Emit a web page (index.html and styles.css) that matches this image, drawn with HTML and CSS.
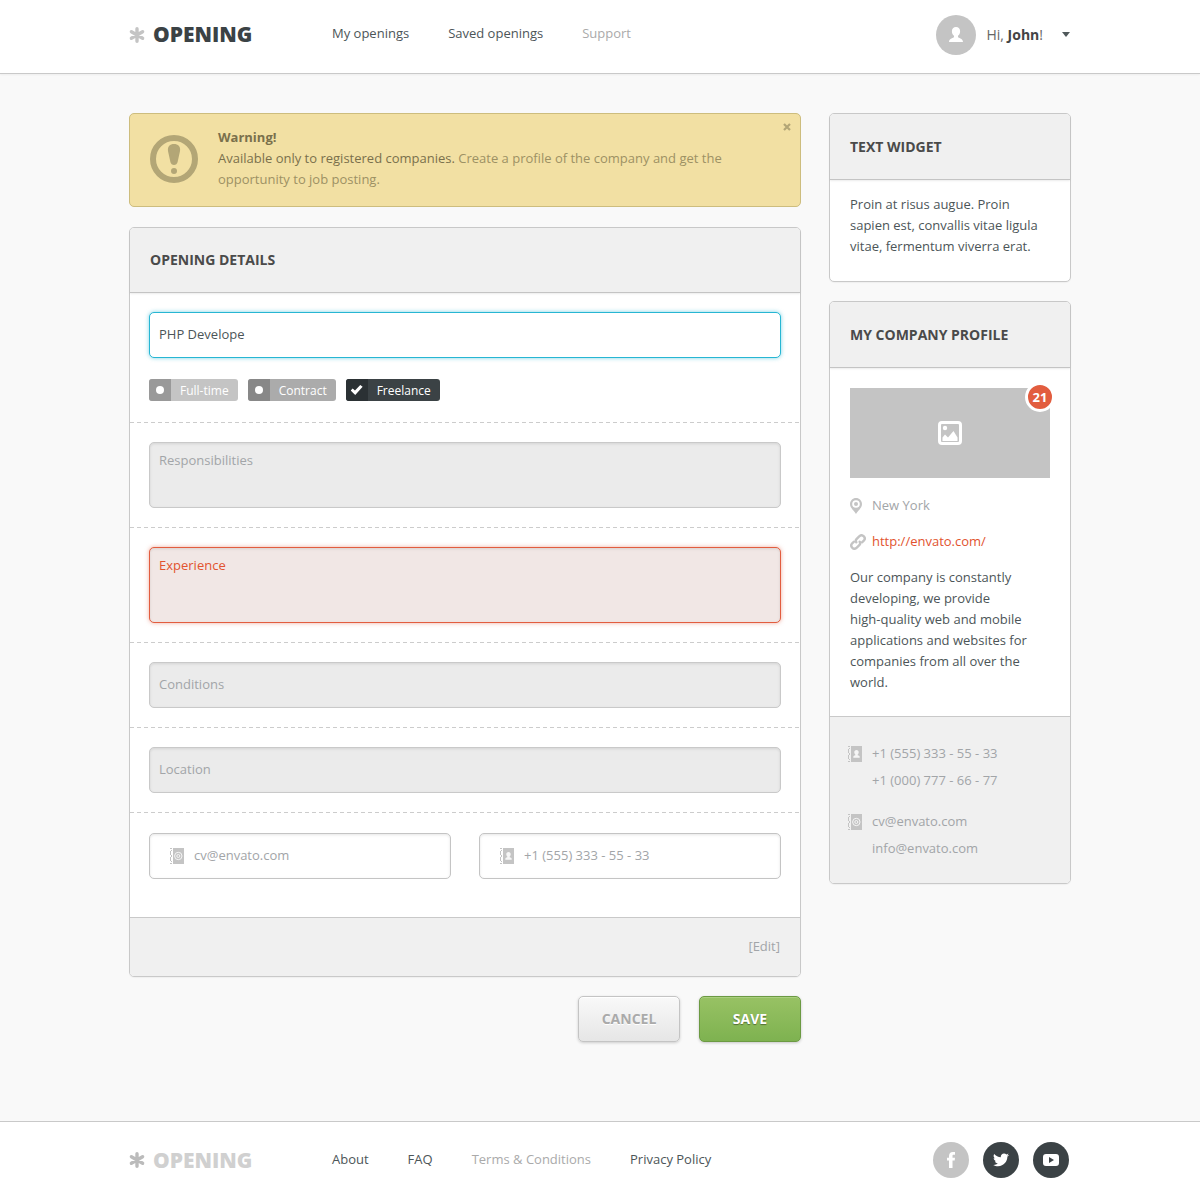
FILE: index.html
```
<!DOCTYPE html>
<html lang="en">
<head>
  <meta charset="UTF-8" />
  <meta name="viewport" content="width=device-width, initial-scale=1.0" />
  <title>Opening</title>
  <link rel="stylesheet" href="styles.css">
</head>
<body>
  <!-- shared icons -->
  <svg class="sprite" aria-hidden="true">
    <symbol id="i-star" viewBox="0 0 16 16">
      <g fill="none" stroke="currentColor" stroke-width="3.400" stroke-linecap="round">
        <path d="M8 1.700v12.600M2.400 4.700l11.200 6.600M13.600 4.700L2.400 11.300" />
      </g>
    </symbol>
    <symbol id="i-phone" viewBox="0 0 14 16">
      <path fill="currentColor" d="M3 0h11v16H3zM0 0h2v1H0zM0 3h1v4H0zM0 9h1v4H0zM0 15h2v1H0zM1 2h1v1H1zM1 7h1v2H1zM1 13h1v1H1z" />
      <path class="cut" d="M8.500 4c1.400 0 2.200 1 2.200 2.200 0 1-.4 1.800-1 2.200v.9c1 .3 2 .7 2 1.700v.7H5.300V11c0-1 1-1.400 2-1.700v-.9c-.6-.4-1-1.200-1-2.200C6.300 5 7.100 4 8.500 4z" />
    </symbol>
    <symbol id="i-mail" viewBox="0 0 14 16">
      <path fill="currentColor" d="M3 0h11v16H3zM0 0h2v1H0zM0 3h1v4H0zM0 9h1v4H0zM0 15h2v1H0zM1 2h1v1H1zM1 7h1v2H1zM1 13h1v1H1z" />
      <circle class="ring" cx="8.300" cy="8" r="3.700" />
      <circle class="ring" cx="8.300" cy="8" r="1.500" />
    </symbol>
  </svg>

  <header class="header">
    <div class="container bar">
      <a href="#" class="logo"><svg><use href="#i-star" /></svg>OPENING</a>
      <nav class="nav">
        <a href="#">My openings</a>
        <a href="#">Saved openings</a>
        <a href="#" class="muted">Support</a>
      </nav>
      <button type="button" class="user">
        <span class="avatar">
          <svg width="14" height="15" viewBox="0 0 14 15"><path fill="#fff" d="M7 0c2.600 0 4.100 1.700 4.100 4.200 0 2-.8 3.700-2.100 4.500v1.400c0 .9 5 1.200 5 4.900H0c0-3.700 5-4 5-4.900V8.700C3.700 7.900 2.900 6.200 2.900 4.200 2.900 1.700 4.400 0 7 0z" /></svg>
        </span>
        <span>Hi, <b>John</b>!</span>
        <i class="caret"></i>
      </button>
    </div>
  </header>

  <div class="container page">
    <main>
      <div class="alert">
        <svg class="alert-icon" viewBox="0 0 48 48">
          <circle cx="24" cy="24" r="21" fill="none" stroke="currentColor" stroke-width="6" />
          <path fill="currentColor" d="M24 9c4 0 6.700 2.600 6 7l-2.400 11c-.5 2-1.800 3-3.600 3s-3.100-1-3.600-3L18 16c-.7-4.400 2-7 6-7z" />
          <circle cx="24" cy="36" r="3" fill="currentColor" />
        </svg>
        <p>
          <strong>Warning!</strong><br>
          <span>Available only to registered companies.</span>
          Create a profile of the company and get the opportunity to job posting.
        </p>
        <button type="button" class="close" aria-label="Close">
          <svg width="8" height="8" viewBox="0 0 8 8"><path d="M1 1l6 6M7 1L1 7" stroke="currentColor" stroke-width="2.200" /></svg>
        </button>
      </div>

      <form id="opening" class="panel">
        <h2 class="panel-head">OPENING DETAILS</h2>
        <div class="section">
          <input type="text" class="field active" value="PHP Develope" aria-label="Position">
          <div class="tags">
            <label class="tag tag-light"><input type="checkbox">Full-time</label>
            <label class="tag"><input type="checkbox">Contract</label>
            <label class="tag tag-dark"><input type="checkbox" checked>Freelance</label>
          </div>
        </div>
        <div class="section">
          <textarea class="field filled" placeholder="Responsibilities" aria-label="Responsibilities"></textarea>
        </div>
        <div class="section">
          <textarea class="field error" placeholder="Experience" aria-label="Experience"></textarea>
        </div>
        <div class="section">
          <input type="text" class="field filled" placeholder="Conditions" aria-label="Conditions">
        </div>
        <div class="section">
          <input type="text" class="field filled" placeholder="Location" aria-label="Location">
        </div>
        <div class="section contacts">
          <label class="field with-icon">
            <svg class="book"><use href="#i-mail" /></svg>
            <input type="email" placeholder="cv@envato.com" aria-label="Email">
          </label>
          <label class="field with-icon">
            <svg class="book"><use href="#i-phone" /></svg>
            <input type="tel" placeholder="+1 (555) 333 - 55 - 33" aria-label="Phone">
          </label>
        </div>
        <div class="panel-foot edit"><a href="#">[Edit]</a></div>
      </form>

      <div class="actions">
        <button type="button" class="btn">CANCEL</button>
        <button type="submit" form="opening" class="btn btn-save">SAVE</button>
      </div>
    </main>

    <aside class="sidebar">
      <section class="panel">
        <h2 class="panel-head">TEXT WIDGET</h2>
        <p class="widget-text">Proin at risus augue. Proin sapien est, convallis vitae ligula vitae, fermentum viverra erat.</p>
      </section>

      <section class="panel">
        <h2 class="panel-head">MY COMPANY PROFILE</h2>
        <div class="profile">
          <div class="photo">
            <svg width="24" height="24" viewBox="0 0 24 24">
              <rect x="1.500" y="1.500" width="21" height="21" rx="2.500" fill="none" stroke="#fff" stroke-width="3" />
              <circle cx="7" cy="7" r="2.200" fill="#fff" />
              <path fill="#fff" d="M4.500 20v-3.500L7 13.500l3 3 5.500-6.500 4 6.500V20z" />
            </svg>
            <span class="badge">21</span>
          </div>
          <div class="info">
            <svg width="12" height="16" viewBox="0 0 12 16"><path fill="currentColor" fill-rule="evenodd" d="M6 0c3.300 0 6 2.700 6 6 0 3.800-3.500 6-6 10C3.500 12 0 9.800 0 6c0-3.300 2.700-6 6-6zm0 2.200a3.800 3.800 0 1 0 0 7.600 3.800 3.800 0 0 0 0-7.600z" /><circle cx="6" cy="6" r="2" fill="currentColor" /></svg>
            <span>New York</span>
          </div>
          <div class="info">
            <svg width="16" height="16" viewBox="0 0 16 16"><g fill="none" stroke="currentColor" stroke-width="2.400" stroke-linecap="round"><path d="M6.300 8.200c-.9-1.300-.6-2.400.4-3.400l2.500-2.400c1.200-1.200 3-1.500 4.400-.2s1.400 3.200.2 4.500L12 8.300" /><path d="M9.700 7.800c.9 1.300.6 2.400-.4 3.400l-2.500 2.400c-1.200 1.200-3 1.500-4.400.2s-1.400-3.200-.2-4.500L4 7.700" /></g></svg>
            <a href="#">http://envato.com/</a>
          </div>
          <p>Our company is constantly developing, we provide<br>high-quality web and mobile applications and websites for companies from all over the world.</p>
        </div>
        <div class="panel-foot numbers">
          <div class="row">
            <svg class="book"><use href="#i-phone" /></svg>
            <div>+1 (555) 333 - 55 - 33<br>+1 (000) 777 - 66 - 77</div>
          </div>
          <div class="row">
            <svg class="book"><use href="#i-mail" /></svg>
            <div>cv@envato.com<br>info@envato.com</div>
          </div>
        </div>
      </section>
    </aside>
  </div>

  <footer class="footer">
    <div class="container bar">
      <a href="#" class="logo logo-muted"><svg><use href="#i-star" /></svg>OPENING</a>
      <nav class="nav">
        <a href="#">About</a>
        <a href="#">FAQ</a>
        <a href="#" class="muted">Terms &amp; Conditions</a>
        <a href="#">Privacy Policy</a>
      </nav>
      <div class="social">
        <a href="#" class="light" aria-label="Facebook"><svg width="10" height="16" viewBox="0 0 10 16"><path fill="#fff" d="M3 16V8.500H1V5.800h2V4.200C3 1.500 4.400 0 6.900 0H9v2.800H7.700c-1 0-1.200.5-1.200 1.300v1.700H9l-.3 2.700H6.500V16z" /></svg></a>
        <a href="#" aria-label="Twitter"><svg width="16" height="14" viewBox="0 0 16 14"><path fill="#fff" d="M16 1.900c-.6.3-1.200.4-1.900.5.7-.4 1.200-1 1.400-1.800-.6.4-1.300.6-2.100.8C12.800.8 12 .4 11 .4 9.200.4 7.800 1.800 7.800 3.600c0 .3 0 .5.100.7C5.200 4.200 2.800 2.900 1.200 1-.1 3.200 1 4.700 2.200 5.400c-.5 0-1-.2-1.500-.4 0 1.600 1.100 2.900 2.600 3.200-.5.1-.9.1-1.400 0 .4 1.300 1.600 2.200 3 2.300C3.500 11.600 1.800 12.100.2 11.900 1.600 12.800 3.300 13.300 5 13.300c6 0 9.400-5 9.400-9.700.6-.5 1.200-1 1.600-1.700z" /></svg></a>
        <a href="#" aria-label="YouTube"><svg width="16" height="12" viewBox="0 0 16 12"><path fill="#fff" fill-rule="evenodd" d="M3 0h10c2 0 3 1 3 3v6c0 2-1 3-3 3H3c-2 0-3-1-3-3V3c0-2 1-3 3-3zm3 3v6l5-3z" /></svg></a>
      </div>
    </div>
  </footer>
</body>
</html>
```
FILE: styles.css
```
* {
  box-sizing: border-box;
}
body {
  margin: 0;
  background: #f9f9f9;
  color: #4c5558;
  font: 13px/21px "Open Sans", "Noto Sans", sans-serif;
}
h2, p {
  margin: 0;
}
a {
  color: inherit;
  text-decoration: none;
}
button, input, textarea {
  font: inherit;
  color: inherit;
}
button {
  padding: 0;
  border: 0;
  background: none;
  cursor: pointer;
}
svg {
  display: block;
  flex: none;
}
.sprite {
  position: absolute;
  width: 0;
  height: 0;
}
.container {
  max-width: 942px;
  margin: 0 auto;
}

/* header / footer */
.header {
  background: #fff;
  border-bottom: 1px solid #c9c9c9;
  box-shadow: 0 1px 2px rgba(0, 0, 0, 0.05);
}
.footer {
  background: #fff;
  border-top: 1px solid #c9c9c9;
}
.bar {
  display: flex;
  align-items: center;
  height: 73px;
}
.header .bar {
  padding: 0 1px 4px 0;
}
.footer .bar {
  padding: 3px 2px 0 0;
}
.logo {
  display: flex;
  align-items: center;
  width: 203px;
  gap: 8px;
  font-size: 21px;
  font-weight: 800;
  color: #3b4245;
}
.logo svg {
  width: 16px;
  height: 16px;
  color: #c4c4c4;
}
.logo-muted {
  color: #d0d0d0;
}
.logo-muted svg {
  color: #bbb;
}
.nav {
  display: flex;
  flex: 1;
  gap: 39px;
  padding-bottom: 2px;
}
.nav .muted {
  color: #aaa;
}
.user {
  display: flex;
  align-items: center;
  font-size: 14px;
  color: #666;
}
.user b {
  color: #444;
}
.avatar {
  display: flex;
  align-items: center;
  justify-content: center;
  width: 40px;
  height: 40px;
  margin-right: 10px;
  border-radius: 50%;
  background: #c4c4c4;
}
.caret {
  margin-left: 19px;
  border: 4px solid transparent;
  border-top: 5px solid #50595b;
  border-bottom: 0;
}
.social {
  display: flex;
  gap: 14px;
}
.social a {
  display: flex;
  align-items: center;
  justify-content: center;
  width: 36px;
  height: 36px;
  border-radius: 50%;
  background: #3b4245;
}
.social .light {
  background: #c4c4c4;
}

/* layout */
.page {
  display: grid;
  grid-template-columns: 1fr 242px;
  align-items: start;
  gap: 28px;
  padding: 39px 0 79px;
}
.sidebar {
  display: grid;
  gap: 19px;
}
.alert {
  position: relative;
  display: flex;
  align-items: center;
  gap: 20px;
  margin-bottom: 20px;
  padding: 13px 20px 16px;
  border: 1px solid #cdbd7e;
  border-radius: 5px;
  background: #f2e0a3;
  color: #9d9164;
}
.alert-icon {
  width: 48px;
  height: 48px;
  color: #b3a676;
}
.alert strong, .alert span {
  color: #7a704c;
}
.close {
  position: absolute;
  top: 9px;
  right: 9px;
  color: #b3a676;
}

/* panels */
.panel {
  border: 1px solid #c9c9c9;
  border-radius: 5px;
  background: #fff;
  box-shadow: 0 1px 1px rgba(0, 0, 0, 0.04);
}
.panel-head {
  padding: 22px 20px;
  border-bottom: 1px solid #c4c4c4;
  border-radius: 4px 4px 0 0;
  background: #f0f0f0;
  box-shadow: 0 1px 2px rgba(0, 0, 0, 0.08);
  color: #4a4a4a;
  font-size: 14px;
  line-height: 21px;
}
form .panel-head {
  padding-top: 21px;
}
.panel-foot {
  border-top: 1px solid #c9c9c9;
  border-radius: 0 0 4px 4px;
  background: #f0f0f0;
  color: #a2a5a8;
}
.section {
  padding: 19px;
}
.section + .section {
  background: repeating-linear-gradient(90deg, #ccc 0 4px, transparent 4px 7px) top / 100% 1px no-repeat;
  padding-top: 20px;
}
.field {
  display: block;
  width: 100%;
  height: 46px;
  padding: 0 9px 2px;
  border: 1px solid #c4c4c4;
  border-radius: 5px;
  outline: none;
  background: #fff;
  box-shadow: inset 0 1px 3px rgba(0, 0, 0, 0.1);
}
textarea.field {
  height: 66px;
  padding-top: 7px;
  resize: none;
}
textarea.error {
  height: 76px;
}
::placeholder {
  color: #a2a5a8;
  opacity: 1;
}
.active {
  border-color: #27b6d3;
  box-shadow: 0 0 4px rgba(39, 182, 211, 0.6);
}
.filled {
  border-color: #c9c9c9;
  background: #ebebeb;
}
.error {
  border-color: #e25d3f;
  background: #f1e7e5;
  box-shadow: 0 0 4px rgba(226, 93, 63, 0.5), inset 0 1px 3px rgba(0, 0, 0, 0.1);
}
.error::placeholder {
  color: #e2532f;
}
.tags {
  display: flex;
  gap: 10px;
  padding: 21px 0 2px;
}
.tag {
  display: flex;
  align-items: center;
  height: 22px;
  padding-right: 9px;
  border-radius: 3px;
  overflow: hidden;
  background: #ababab;
  color: #fff;
  font-size: 12px;
}
.tag input {
  display: flex;
  align-items: center;
  justify-content: center;
  width: 22px;
  height: 22px;
  margin: 0 9px 0 0;
  appearance: none;
  background: #888;
}
.tag input::before {
  content: "";
  width: 8px;
  height: 8px;
  border-radius: 50%;
  background: #fff;
}
.tag input:checked::before {
  width: 12px;
  height: 10px;
  border-radius: 0;
  clip-path: polygon(0 55%, 17% 35%, 36% 55%, 80% 0, 100% 18%, 38% 100%);
}
.tag-light {
  background: #c4c4c4;
}
.tag-light input {
  background: #999;
}
.tag-dark {
  background: #3b4245;
}
.tag-dark input {
  background: #2b3134;
}
.section.contacts {
  display: grid;
  grid-template-columns: 1fr 1fr;
  gap: 28px;
  padding-top: 21px;
  padding-bottom: 38px;
}
.with-icon {
  display: flex;
  align-items: center;
  gap: 10px;
  padding: 0 20px;
}
.with-icon input {
  flex: 1;
  min-width: 0;
  padding: 0 0 2px;
  border: 0;
  outline: none;
  background: none;
}
.book {
  width: 14px;
  height: 16px;
  color: #c4c4c4;
}
.cut {
  fill: #f6f6f6;
}
.ring {
  fill: none;
  stroke: #f6f6f6;
}
.edit {
  padding: 18px 20px 19px;
  text-align: right;
}
.actions {
  display: flex;
  justify-content: flex-end;
  gap: 19px;
  margin-top: 19px;
}
.btn {
  width: 102px;
  height: 46px;
  padding-bottom: 2px;
  border: 1px solid #c4c4c4;
  border-radius: 5px;
  background: linear-gradient(#f9f9f9, #e6e6e6);
  box-shadow: 0 1px 3px rgba(0, 0, 0, 0.18), inset 0 1px 0 #fff;
  color: #aaa;
  font-size: 14px;
  font-weight: 700;
  text-shadow: 0 1px 0 #fff;
}
.btn-save {
  border-color: #6c9a43;
  background: linear-gradient(#98c264, #7eb250);
  box-shadow: 0 1px 3px rgba(0, 0, 0, 0.2), inset 0 1px 0 #aacf7f;
  color: #fff;
  text-shadow: 0 1px 1px rgba(0, 0, 0, 0.4);
}

/* sidebar */
.widget-text {
  padding: 14px 20px 24px;
}
.profile {
  padding: 20px 20px 23px;
}
.photo {
  position: relative;
  display: flex;
  align-items: center;
  justify-content: center;
  height: 90px;
  margin-bottom: 17px;
  background: #c4c4c4;
}
.badge {
  position: absolute;
  top: -6px;
  right: -5px;
  width: 30px;
  height: 30px;
  border: 3px solid #fff;
  border-radius: 50%;
  background: #e25d3f;
  color: #fff;
  font-weight: 700;
  line-height: 24px;
  text-align: center;
}
.info {
  display: grid;
  grid-template-columns: 22px 1fr;
  align-items: center;
  margin-bottom: 15px;
  color: #a2a5a8;
}
.info svg {
  color: #c4c4c4;
}
.info a {
  color: #e2532f;
}
.numbers {
  display: grid;
  gap: 14px;
  padding: 23px 18px 21px;
  line-height: 27px;
}
.row {
  display: flex;
  gap: 10px;
}
.row .book {
  margin-top: 6px;
}
```
